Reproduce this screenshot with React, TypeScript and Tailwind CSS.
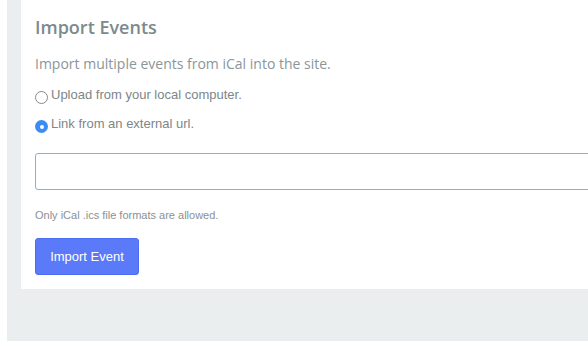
import { useState } from "react";

const openSans = { fontFamily: '"Open Sans", "Noto Sans", sans-serif' };

function Radio({ checked, label, onSelect }: { checked: boolean; label: string; onSelect: () => void }) {
  return (
    <label className="flex cursor-pointer items-start text-[13px] leading-[16px] text-[#7d8688]" onClick={onSelect}>
      {checked ? (
        <span className="mt-[4px] flex h-[13px] w-[13px] shrink-0 items-center justify-center rounded-full bg-[#3b8df5]">
          <span className="h-[4px] w-[4px] rounded-full bg-white" />
        </span>
      ) : (
        <span className="mt-[4px] h-[13px] w-[13px] shrink-0 rounded-full border border-[#8a8a8a] bg-white" />
      )}
      <span className="ml-[3px]">{label}</span>
    </label>
  );
}

export default function App() {
  const [source, setSource] = useState<"upload" | "link">("link");

  return (
    <div className="h-[342px] w-[588px] overflow-hidden bg-white pl-[7px]" style={{ fontFamily: '"Liberation Sans", Arial, sans-serif' }}>
      <div className="h-[341px] bg-[#ebeeef] pl-[14px]">
        <div className="h-[289px] bg-white pl-[14px] pt-[15px]">
          <h2 className="text-[18px] font-semibold leading-[24px] text-[#7c8a8c]" style={openSans}>
            Import Events
          </h2>
          <p className="mt-[15px] text-[14px] leading-[20px] text-[#8b9597]" style={openSans}>
            Import multiple events from iCal into the site.
          </p>

          <div className="mt-[13px] flex flex-col gap-[12px]">
            <Radio checked={source === "upload"} label="Upload from your local computer." onSelect={() => setSource("upload")} />
            <Radio checked={source === "link"} label="Link from an external url." onSelect={() => setSource("link")} />
          </div>

          <input
            type="text"
            className="mt-[20px] block h-[37px] w-[600px] rounded-[3px] border border-[#74b4f0] bg-white px-3 text-[13px] outline-none"
          />

          <p className="mt-[18px] text-[11px] leading-[14px] text-[#8a9194]">Only iCal .ics file formats are allowed.</p>

          <button className="mt-[16px] h-[37px] w-[104px] rounded-[3px] border border-[#4d6ef0] bg-[#5a7afa] text-[13px] text-white">
            Import Event
          </button>
        </div>
      </div>
    </div>
  );
}
